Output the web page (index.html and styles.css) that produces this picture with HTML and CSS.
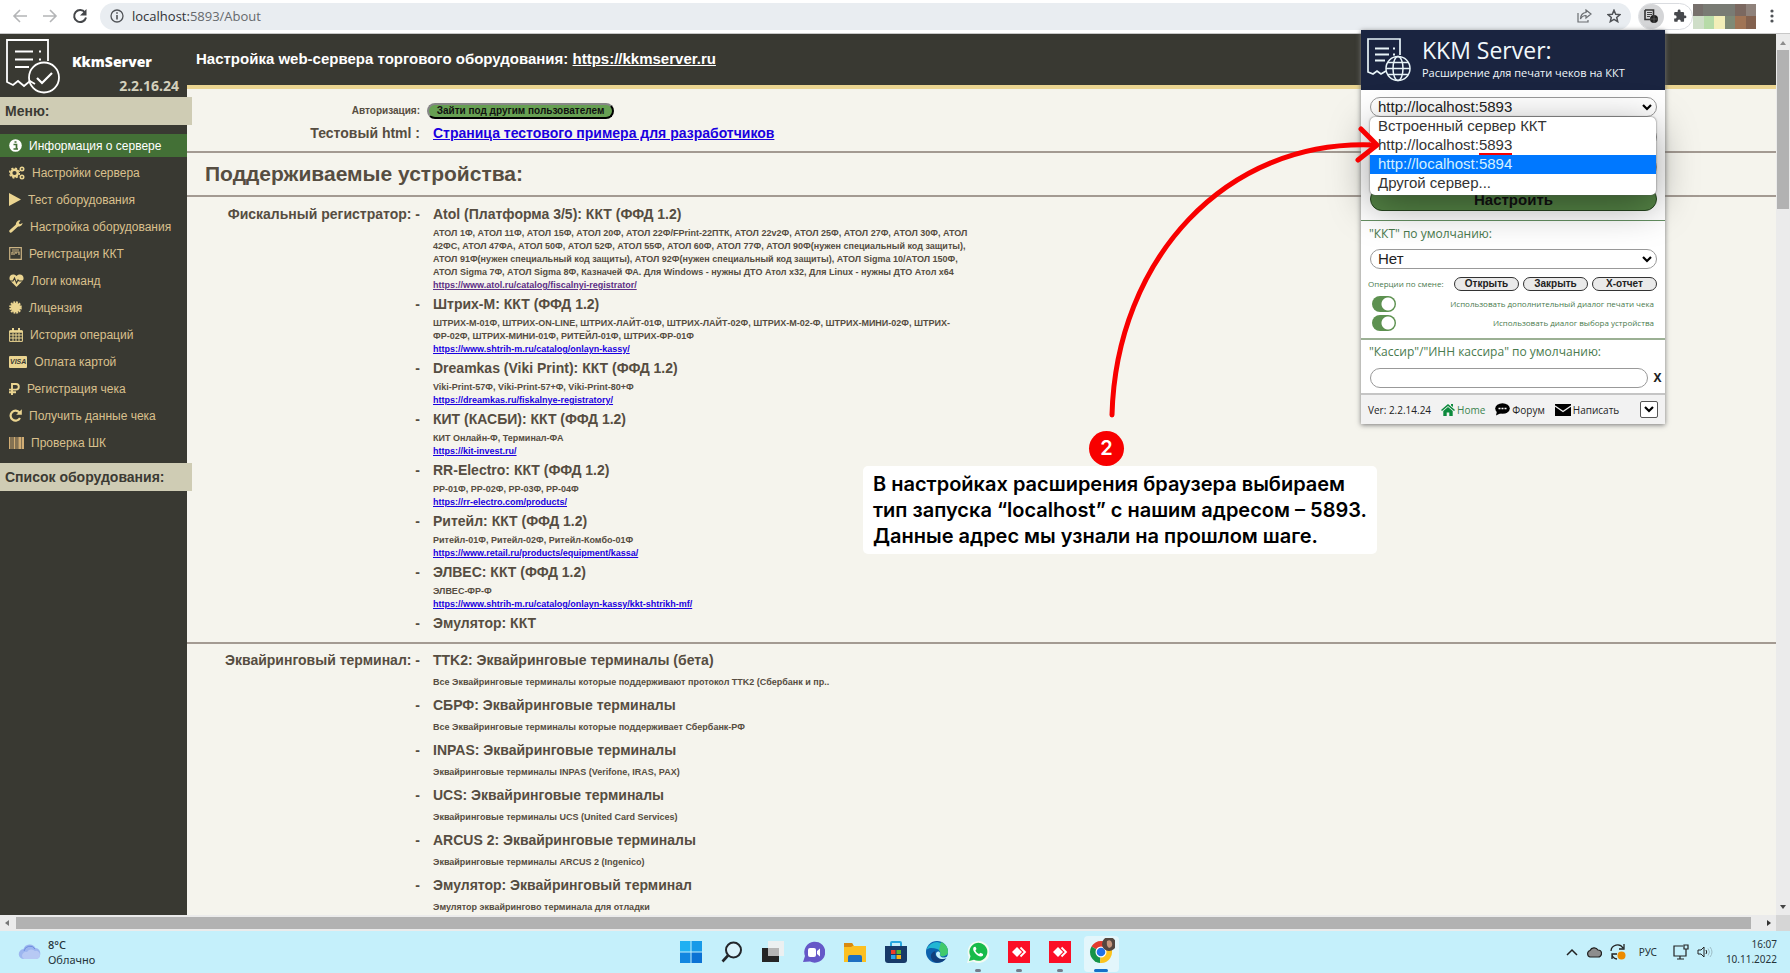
FILE: index.html
```html
<!DOCTYPE html>
<html lang="ru">
<head>
<meta charset="utf-8">
<title>KkmServer</title>
<link rel="stylesheet" href="styles.css">
</head>
<body>
<div class="toolbar">
  <button class="tool" aria-label="Назад"><svg width="16" height="16" viewBox="0 0 16 16" fill="none" stroke="#b4b5b7" stroke-width="1.6"><path d="M15 8H2M8 2L2 8l6 6"/></svg></button>
  <button class="tool" aria-label="Вперёд"><svg width="16" height="16" viewBox="0 0 16 16" fill="none" stroke="#b4b5b7" stroke-width="1.6"><path d="M1 8h13M8 2l6 6-6 6"/></svg></button>
  <button class="tool" aria-label="Обновить"><svg width="16" height="16" viewBox="0 0 16 16"><path d="M13 4.5A6 6 0 1 0 14 9.500" fill="none" stroke="#444649" stroke-width="2"/><path d="M14.500 1v6.500H8z" fill="#444649"/></svg></button>
  <div class="address">
    <svg width="14" height="14" viewBox="0 0 14 14"><circle cx="7" cy="7" r="6" fill="none" stroke="#505357" stroke-width="1.300"/><path d="M7 6v4.500M7 3.300v1.500" stroke="#505357" stroke-width="1.600"/></svg>
    <span class="url">localhost:<span class="path">5893/About</span></span>
    <svg class="share" width="15" height="14" viewBox="0 0 15 14" fill="none" stroke="#6a6d71" stroke-width="1.200"><path d="M1 4v9h10v-2M9 1l5 4-5 4V6.500C6 6.500 4.500 8 3.500 10 3.500 6 6 3.500 9 3.500z"/></svg>
    <svg width="14" height="14" viewBox="0 0 14 14" fill="none" stroke="#505357" stroke-width="1.500"><path d="M7 1.200l1.700 4 4.300.4-3.300 2.800 1 4.200L7 10.300l-3.700 2.300 1-4.200L1 5.600l4.300-.4z"/></svg>
  </div>
  <div class="extensions">
    <button class="ext active" aria-label="KKM Server"><svg width="14" height="14" viewBox="0 0 14 14"><path d="M1 1h8.500v6M1 1v9.500h5" fill="none" stroke="#333" stroke-width="1.600"/><path d="M3 3.500h5M3 5.500h5M3 7.500h3" stroke="#444"/><circle cx="10" cy="10" r="4" fill="#222"/><path d="M6.500 10h7M10 6v8" stroke="#777" stroke-width=".6"/></svg></button>
    <button class="ext" aria-label="Расширения"><svg width="14" height="14" viewBox="0 0 24 24" fill="#46484c"><path d="M20.500 11H19V7a2 2 0 0 0-2-2h-4V3.500a2.500 2.500 0 0 0-5 0V5H4a2 2 0 0 0-2 2v3.800h1.500a2.700 2.700 0 0 1 0 5.400H2V20a2 2 0 0 0 2 2h3.800v-1.500a2.700 2.700 0 0 1 5.400 0V22H17a2 2 0 0 0 2-2v-4h1.500a2.500 2.500 0 0 0 0-5z"/></svg></button>
  </div>
  <svg class="profile" width="63" height="25" viewBox="0 0 63 25" shape-rendering="crispEdges"><path fill="#77706c" d="M0 0h63v12H0z"/><path fill="#797b74" d="M10 0h32v12H10z"/><path fill="#7b6860" d="M42 0h11v12H42z"/><path fill="#8f827b" d="M53 0h10v12H53z"/><path fill="#cfdec8" d="M0 12h11v13H0z"/><path fill="#b7dba8" d="M11 12h10v13H11z"/><path fill="#f3eeb8" d="M21 12h11v13H21z"/><path fill="#7f8a76" d="M32 12h10v13H32z"/><path fill="#a07455" d="M42 12h11v13H42z"/><path fill="#83614e" d="M53 12h10v13H53z"/></svg>
  <button class="more" aria-label="Меню браузера"><svg width="4" height="14" viewBox="0 0 4 14" fill="#505357"><circle cx="2" cy="2" r="1.600"/><circle cx="2" cy="7" r="1.600"/><circle cx="2" cy="12" r="1.600"/></svg></button>
</div>

<div class="viewport">
  <aside class="sidebar">
    <div class="brand">
      <svg width="56" height="56" viewBox="0 0 56 56" fill="none" stroke="#fff" stroke-width="1.800"><path d="M43 23V2H2v42l6 3 5-4 6 5 6-5 5 3"/><path d="M10 13.500h18M10 21.500h18M10 29h14M34 13.500h2M34 21.500h2" stroke-width="2.200"/><circle cx="39" cy="39.500" r="15"/><path d="M32 40l5 5 10-10" stroke-width="2.200"/></svg>
      <div class="brand-name"><strong>KkmServer</strong><span>2.2.16.24</span></div>
    </div>
    <h2 class="side-title">Меню:</h2>
    <nav class="menu">
      <a class="current" href="#"><svg width="13" height="13" viewBox="0 0 13 13"><circle cx="6.500" cy="6.500" r="6.300" fill="#fff"/><path d="M4.500 5.500h3V10M4.500 10h4.500M5.500 3h2" stroke="#437036" stroke-width="1.700" fill="none"/></svg>Информация о сервере</a>
      <a href="#"><svg width="16" height="14" viewBox="0 0 16 14" fill="none" stroke="#ebd591"><circle cx="5.500" cy="7" r="3.300" stroke-width="2.400"/><circle cx="5.500" cy="7" r="4.900" stroke-width="1.500" stroke-dasharray="2 1.850"/><circle cx="13" cy="3" r="1.700" stroke-width="1.600"/><circle cx="13" cy="11" r="1.700" stroke-width="1.600"/></svg>Настройки сервера</a>
      <a href="#"><svg width="12" height="13" viewBox="0 0 12 13"><path d="M0 0l12 6.500L0 13z" fill="#ebd591"/></svg>Тест оборудования</a>
      <a href="#"><svg width="14" height="13" viewBox="0 0 14 13"><path d="M1.800 11.200L8 5.500" stroke="#ebd591" stroke-width="3" stroke-linecap="round"/><path d="M11.500.4a4 4 0 0 0-4.500 5A4 4 0 0 0 13.700 3L11 4.200 9.700 3z" fill="#ebd591"/></svg>Настройка оборудования</a>
      <a href="#"><svg width="13" height="13" viewBox="0 0 13 13"><path d="M.7.7h11.600v11.600H.7zM3 3h7M3 5h7v3M3 5v3M5 6v2M7 5v2" fill="none" stroke="#cbb383" stroke-width="1.200"/></svg>Регистрация ККТ</a>
      <a href="#"><svg width="15" height="13" viewBox="0 0 15 13"><path d="M7.500 13L1.300 6.800C-1.500 3 3 -2 7.500 2c4.500-4 9 1 6.200 4.800z" fill="#ebd591"/><path d="M0 7h4l1.500-3 2 5L9 6l1 1h5" fill="none" stroke="#393932" stroke-width="1.100"/></svg>Логи команд</a>
      <a href="#"><svg width="13" height="13" viewBox="0 0 13 13"><circle cx="6.500" cy="6.500" r="4.800" fill="#ebd591"/><circle cx="6.500" cy="6.500" r="5.400" fill="none" stroke="#ebd591" stroke-width="1.800" stroke-dasharray="1.900 .92"/></svg>Лицензия</a>
      <a href="#"><svg width="14" height="14" viewBox="0 0 14 14" fill="none" stroke="#ebd591"><path d="M.6 3h12.800v10.400H.6zM.6 7h12.800M.6 10h12.800M4 5v8M7 5v8M10 5v8"/><path d="M.6 3.500h12.800" stroke-width="2.500"/><path d="M4 0v3M10 0v3" stroke-width="2"/></svg>История операций</a>
      <a href="#"><span class="visa">VISA</span>Оплата картой</a>
      <a href="#"><svg width="11" height="12" viewBox="0 0 11 12"><path d="M3 12V1h4a2.700 2.700 0 0 1 0 5.600H0M0 9.200h7" fill="none" stroke="#ebd591" stroke-width="1.900"/></svg>Регистрация чека</a>
      <a href="#"><svg width="13" height="13" viewBox="0 0 13 13"><path d="M10.500 3.500A5 5 0 1 0 11 9" fill="none" stroke="#ebd591" stroke-width="2.200"/><path d="M12.800.2v5.600H7.200z" fill="#ebd591"/></svg>Получить данные чека</a>
      <a href="#"><svg width="15" height="12" viewBox="0 0 15 12"><path d="M0 0h1.500v12H0zM2.500 0h1v12h-1zM4.500 0h2v12h-2zM7.500 0h1v12h-1zM9.300 0h3v12h-3zM12.800 0H15v12h-2.200z" fill="#d1ad74"/></svg>Проверка ШК</a>
    </nav>
    <h2 class="side-title">Список оборудования:</h2>
  </aside>

  <main class="main">
    <header class="page-head">Настройка web-сервера торгового оборудования: <a href="#">https://kkmserver.ru</a></header>
    <section class="block intro">
      <div class="row"><span class="label small">Авторизация:</span><div class="login"><button class="pill-green">Зайти под другим пользователем</button></div></div>
      <div class="row"><span class="label">Тестовый html :</span><div><a href="#">Страница тестового примера для разработчиков</a></div></div>
    </section>
    <h1 class="heading">Поддерживаемые устройства:</h1>
    <section class="block devices">
      <div class="row"><span class="label">Фискальный регистратор: -</span><div><h3>Atol (Платформа 3/5): ККТ (ФФД 1.2)</h3><p>АТОЛ 1Ф, АТОЛ 11Ф, АТОЛ 15Ф, АТОЛ 20Ф, АТОЛ 22Ф/FPrint-22ПТК, АТОЛ 22v2Ф, АТОЛ 25Ф, АТОЛ 27Ф, АТОЛ 30Ф, АТОЛ 42ФС, АТОЛ 47ФА, АТОЛ 50Ф, АТОЛ 52Ф, АТОЛ 55Ф, АТОЛ 60Ф, АТОЛ 77Ф, АТОЛ 90Ф(нужен специальный код защиты), АТОЛ 91Ф(нужен специальный код защиты), АТОЛ 92Ф(нужен специальный код защиты), АТОЛ Sigma 10/АТОЛ 150Ф, АТОЛ Sigma 7Ф, АТОЛ Sigma 8Ф, Казначей ФА. Для Windows - нужны ДТО Атол x32, Для Linux - нужны ДТО Атол x64</p><p><a class="visited" href="#">https://www.atol.ru/catalog/fiscalnyi-registrator/</a></p></div></div>
      <div class="row"><span class="label">-</span><div><h3>Штрих-М: ККТ (ФФД 1.2)</h3><p>ШТРИХ-М-01Ф, ШТРИХ-ON-LINE, ШТРИХ-ЛАЙТ-01Ф, ШТРИХ-ЛАЙТ-02Ф, ШТРИХ-М-02-Ф, ШТРИХ-МИНИ-02Ф, ШТРИХ-<span class="keep">ФР-02Ф,</span> ШТРИХ-МИНИ-01Ф, РИТЕЙЛ-01Ф, ШТРИХ-ФР-01Ф</p><p><a href="#">https://www.shtrih-m.ru/catalog/onlayn-kassy/</a></p></div></div>
      <div class="row"><span class="label">-</span><div><h3>Dreamkas (Viki Print): ККТ (ФФД 1.2)</h3><p>Viki-Print-57Ф, Viki-Print-57+Ф, Viki-Print-80+Ф</p><p><a href="#">https://dreamkas.ru/fiskalnye-registratory/</a></p></div></div>
      <div class="row"><span class="label">-</span><div><h3>КИТ (КАСБИ): ККТ (ФФД 1.2)</h3><p>КИТ Онлайн-Ф, Терминал-ФА</p><p><a href="#">https://kit-invest.ru/</a></p></div></div>
      <div class="row"><span class="label">-</span><div><h3>RR-Electro: ККТ (ФФД 1.2)</h3><p>РР-01Ф, РР-02Ф, РР-03Ф, РР-04Ф</p><p><a href="#">https://rr-electro.com/products/</a></p></div></div>
      <div class="row"><span class="label">-</span><div><h3>Ритейл: ККТ (ФФД 1.2)</h3><p>Ритейл-01Ф, Ритейл-02Ф, Ритейл-Комбо-01Ф</p><p><a href="#">https://www.retail.ru/products/equipment/kassa/</a></p></div></div>
      <div class="row"><span class="label">-</span><div><h3>ЭЛВЕС: ККТ (ФФД 1.2)</h3><p>ЭЛВЕС-ФР-Ф</p><p><a href="#">https://www.shtrih-m.ru/catalog/onlayn-kassy/kkt-shtrikh-mf/</a></p></div></div>
      <div class="row"><span class="label">-</span><div><h3>Эмулятор: ККТ</h3></div></div>
    </section>
    <section class="block terminals">
      <div class="row"><span class="label">Эквайринговый терминал: -</span><div><h3>TTK2: Эквайринговые терминалы (бета)</h3><p>Все Эквайринговые терминалы которые поддерживают протокол TTK2 (Сбербанк и пр..</p></div></div>
      <div class="row"><span class="label">-</span><div><h3>СБРФ: Эквайринговые терминалы</h3><p>Все Эквайринговые терминалы которые поддерживает Сбербанк-РФ</p></div></div>
      <div class="row"><span class="label">-</span><div><h3>INPAS: Эквайринговые терминалы</h3><p>Эквайринговые терминалы INPAS (Verifone, IRAS, PAX)</p></div></div>
      <div class="row"><span class="label">-</span><div><h3>UCS: Эквайринговые терминалы</h3><p>Эквайринговые терминалы UCS (United Card Services)</p></div></div>
      <div class="row"><span class="label">-</span><div><h3>ARCUS 2: Эквайринговые терминалы</h3><p>Эквайринговые терминалы ARCUS 2 (Ingenico)</p></div></div>
      <div class="row"><span class="label">-</span><div><h3>Эмулятор: Эквайринговый терминал</h3><p>Эмулятор эквайрингово терминала для отладки</p></div></div>
    </section>
  </main>

  <div class="vscroll"><svg width="8" height="16" viewBox="0 0 8 16"><path d="M1 11l3-4 3 4z" fill="#8c8c8c"/></svg><div class="vthumb"></div><svg width="8" height="16" viewBox="0 0 8 16"><path d="M1 6l3 4 3-4z" fill="#444"/></svg></div>
</div>

<div class="hscroll"><svg width="16" height="8" viewBox="0 0 16 8"><path d="M9 1L5 4l4 3z" fill="#777"/></svg><div class="hthumb"></div><svg width="25" height="8" viewBox="0 0 25 8"><path d="M16 1l4 3-4 3z" fill="#333"/></svg><div class="corner"></div></div>

<footer class="taskbar">
  <div class="weather">
    <svg width="24" height="18" viewBox="0 0 24 18"><path d="M6 16a5 5 0 0 1-.5-10 6.500 6.500 0 0 1 12-1A5.600 5.600 0 0 1 18 16z" fill="#9db6ef"/><path d="M4 13a4 4 0 0 1 5-4 5 5 0 0 1 8-1 4 4 0 0 1 5 4 4 4 0 0 1-4 4H6a4 4 0 0 1-2-3z" fill="#b7c9f4"/><path d="M6 8a6 6 0 0 1 11-2" fill="none" stroke="#6e8fe0"/></svg>
    <div><b>8°C</b><span>Облачно</span></div>
  </div>
  <div class="apps">
    <button aria-label="Пуск"><svg viewBox="0 0 22 22"><path d="M0 0h10.500v10.500H0z" fill="#20b0f2"/><path d="M11.500 0H22v10.500H11.500z" fill="#189ae8"/><path d="M0 11.500h10.500V22H0z" fill="#1286e0"/><path d="M11.500 11.500H22V22H11.500z" fill="#0b72d4"/></svg></button>
    <button aria-label="Поиск"><svg viewBox="0 0 22 22"><circle cx="12.500" cy="9" r="7.500" fill="#d9f2fa" stroke="#23262a" stroke-width="2"/><path d="M7 14.500L1.500 20.500" stroke="#23262a" stroke-width="2.600"/></svg></button>
    <button aria-label="Представление задач"><svg viewBox="0 0 22 22"><path d="M0 7h17v14H0z" fill="#252525"/><path d="M6 0h16v15H6z" fill="#f0f0f0" opacity=".9"/><path d="M6 7h11v8H6z" fill="#b5b5b5"/></svg></button>
    <button aria-label="Чат"><svg viewBox="0 0 22 22"><path d="M0 21l2-6A10.500 10.500 0 1 1 7 20.500z" fill="#6558c8"/><rect x="5" y="7" width="8" height="9" rx="2" fill="#fff"/><path d="M14 10l3-2.500v8L14 13z" fill="#fff"/></svg></button>
    <button aria-label="Проводник"><svg viewBox="0 0 22 22"><path d="M0 2h8l2 3h12v16H0z" fill="#fcc021"/><path d="M0 2h8l1.500 2.500L7 6H0z" fill="#d98a10"/><path d="M4 21v-5q0-2 2-2h10q2 0 2 2v5z" fill="#1d6fc1"/></svg></button>
    <button aria-label="Магазин"><svg viewBox="0 0 22 22"><path d="M6 5V2q0-1 1-1h8q1 0 1 1v3" fill="none" stroke="#28a8e0" stroke-width="2"/><path d="M0 5h22v14q0 3-3 3H3q-3 0-3-3z" fill="#173a68"/><path d="M6 9h4.500v4H6z" fill="#f03c28"/><path d="M11.500 9H16v4h-4.500z" fill="#5ab52e"/><path d="M6 14h4.500v4H6z" fill="#29a5ea"/><path d="M11.500 14H16v4h-4.500z" fill="#f8b415"/></svg></button>
    <button aria-label="Edge"><svg viewBox="0 0 22 22"><circle cx="11" cy="11" r="11" fill="#0d62ae"/><path d="M.5 9A11 11 0 0 1 22 11c0 4-7 5.500-8 3 1-2 .5-5-3-6S3 6 .5 9z" fill="#23b6d3"/><path d="M15 1a11 11 0 0 1 7 10c0 4-7 5.500-8 3 1-2 0-4-1-5z" fill="#40c96c"/><path d="M9.500 10c-2 5 3 9.500 11 7-3 4-8 5.500-12 4C3 18 4 11 9.500 10z" fill="#123f7c"/><path d="M13.700 14c1 3 5 3.500 8.300 1l-1 2c-5 2.500-11 0-11-4 0-2 2-3 3.500-2 .8 1 .8 2 .2 3z" fill="#c5f0fb"/></svg></button>
    <button class="running" aria-label="WhatsApp"><svg viewBox="0 0 22 22"><path d="M0 22l1.800-6A11 11 0 1 1 6 20.500z" fill="#f3fbf3"/><path d="M2 20l1.500-4.800A9 9 0 1 1 7 18.700z" fill="#18bb4a"/><path d="M7 6c-2 2 0 5 2 7s5 3.500 7 1.500l0-1.500-2.500-1.300-1.500 1.300c-2-.8-3-2-3.600-3.500L9.500 8 8.500 5.800z" fill="#fff"/></svg></button>
    <button class="running" aria-label="AnyDesk 1"><svg viewBox="0 0 22 22"><path d="M0 0h22v22H0z" fill="#fb0f26"/><path d="M4 11l5-5 5 5-5 5z" fill="#fff"/><path d="M12.500 6.500L17 11l-4.500 4.500" fill="none" stroke="#fff" stroke-width="1.800"/></svg></button>
    <button class="running" aria-label="AnyDesk 2"><svg viewBox="0 0 22 22"><path d="M0 0h22v22H0z" fill="#fb0f26"/><path d="M4 11l5-5 5 5-5 5z" fill="#fff"/><path d="M12.500 6.500L17 11l-4.500 4.500" fill="none" stroke="#fff" stroke-width="1.800"/></svg></button>
    <button class="open" aria-label="Chrome"><svg viewBox="0 0 28 28"><path d="M14 14L4.500 8.500A11 11 0 0 1 23.500 8.500L14 9z" fill="#e33b2e"/><path d="M14 14l-9.500-5.500A11 11 0 0 0 13 25z" fill="#159447"/><path d="M14 14l9.500-5.500A11 11 0 0 1 13 25z" fill="#fcc31e"/><circle cx="14" cy="14" r="5.500" fill="#fff"/><circle cx="14" cy="14" r="4.300" fill="#2172e8"/><circle cx="22" cy="6" r="7" fill="#55463f"/><path d="M20 3q4-2 5 2t-3 5q-3-2-2-7z" fill="#c5957d"/></svg></button>
  </div>
  <div class="tray">
    <svg width="12" height="8" viewBox="0 0 12 8"><path d="M1 7l5-5 5 5" fill="none" stroke="#222" stroke-width="1.500"/></svg>
    <svg width="16" height="12" viewBox="0 0 16 12"><path d="M4 11a3.400 3.400 0 0 1 0-6.500 4.500 4.500 0 0 1 8-.5 3.500 3.500 0 0 1 0 7z" fill="#8d8d8d" stroke="#222" stroke-width="1.200"/></svg>
    <svg width="16" height="16" viewBox="0 0 16 16"><path d="M1 7a6.500 6.500 0 0 1 12-3M14 0v5H9M2 15v-5h5M2 11a6 6 0 0 0 5 4" fill="none" stroke="#222" stroke-width="1.300"/><circle cx="11.500" cy="11.500" r="4" fill="#ed8b00"/></svg>
    <span class="lang">РУС</span>
    <svg width="16" height="16" viewBox="0 0 16 16" fill="none" stroke="#222" stroke-width="1.200"><path d="M10 2H1v10h12V8M4 15h7M7 12v3M11 1h4v4h-4zM13 5v4"/></svg>
    <svg width="16" height="12" viewBox="0 0 16 12" fill="none" stroke="#222"><path d="M1 4h3l3-3v10L4 8H1zM9 4q1.500 2 0 4"/><path d="M11 2.500q3 3.500 0 7M13 1q4 5 0 10" stroke="#9cbcc5"/></svg>
    <div class="clock"><span>16:07</span><span>10.11.2022</span></div>
  </div>
</footer>

<div class="popup">
  <header class="popup-head">
    <svg width="44" height="44" viewBox="0 0 44 44" fill="none" stroke="#e8f4f8" stroke-width="1.700"><path d="M33 17V1H1v33l5 2 4-3 4 3 5-3"/><path d="M8 10.500h14M8 16.500h14M8 22.500h10M26 10.500h2M26 16.500h2" stroke-width="2"/><circle cx="31" cy="30.500" r="12" stroke-width="1.500"/><ellipse cx="31" cy="30.500" rx="5" ry="12" stroke-width="1.500"/><path d="M19 30.500h24M21 24.500h20M21 36.500h20" stroke-width="1.500"/></svg>
    <div><strong>KKM Server:</strong><span>Расширение для печати чеков на ККТ</span></div>
  </header>
  <div class="popup-part server">
    <div class="combo">
      <select aria-label="Сервер"><option>http://localhost:5893</option></select>
      <ul class="options" role="listbox">
        <li role="option">Встроенный сервер ККТ</li>
        <li role="option">http://localhost:<span class="mark">5893</span></li>
        <li role="option" class="hover">http://localhost:5894</li>
        <li role="option">Другой сервер...</li>
      </ul>
    </div>
    <input type="text" aria-label="Логин">
    <input type="password" aria-label="Пароль">
    <button class="setup">Настроить</button>
  </div>
  <div class="popup-part kkt">
    <label for="kkt">"ККТ" по умолчанию:</label>
    <select id="kkt"><option>Нет</option></select>
    <div class="shift"><span>Оперции по смене:</span><button>Открыть</button><button>Закрыть</button><button>X-отчет</button></div>
    <div class="switch"><input type="checkbox" id="sw1" checked><label for="sw1">Использовать дополнительный диалог печати чека</label></div>
    <div class="switch"><input type="checkbox" id="sw2" checked><label for="sw2">Использовать диалог выбора устройства</label></div>
  </div>
  <div class="popup-part cashier">
    <label for="cash">"Кассир"/"ИНН кассира" по умолчанию:</label>
    <div class="cash-row"><input id="cash" type="text"><button aria-label="Очистить">X</button></div>
  </div>
  <footer class="popup-foot">
    <span>Ver: 2.2.14.24</span>
    <a class="home" href="#"><svg width="14" height="12" viewBox="0 0 14 12" fill="#0c8a3c"><path d="M7 0l7 6-1 1-6-5-6 5-1-1zM10 0h2v3l-2-1.500zM2.300 7L7 3l4.700 4v5H8.300V8.500H5.700V12H2.300z"/></svg>Home</a>
    <a href="#"><svg width="15" height="13" viewBox="0 0 15 13"><ellipse cx="7.500" cy="5.500" rx="7.300" ry="5.300" fill="#000"/><path d="M2 8l-1 4.500 5-2.500z"/><path d="M3.500 5.500h2M6.500 5.500h2M9.500 5.500h2" stroke="#fff" stroke-width="1.600"/></svg>Форум</a>
    <a href="#"><svg width="16" height="12" viewBox="0 0 16 12"><path d="M0 0h16v12H0z"/><path d="M0 2l8 5.500L16 2" fill="none" stroke="#f2f2f2" stroke-width="1.400"/></svg>Написать</a>
    <button aria-label="Развернуть"><svg width="10" height="7" viewBox="0 0 10 7"><path d="M1 1l4 4 4-4" fill="none" stroke="#000" stroke-width="2.200"/></svg></button>
  </footer>
</div>

<svg class="arrow" width="280" height="300" viewBox="1100 120 280 300" fill="none" stroke="#f80000" stroke-width="5" stroke-linecap="round" stroke-linejoin="round"><path d="M1112 415C1116 260 1225 139 1374 145"/><path d="M1361 129l16 16-19 15"/></svg>
<div class="note">
  <span class="step">2</span>
  <p>В настройках расширения браузера выбираем<br>тип запуска “localhost” с нашим адресом – 5893.<br>Данные адрес мы узнали на прошлом шаге.</p>
</div>
</body>
</html>
```
FILE: styles.css
```css
* { box-sizing: border-box; }
body { margin: 0; height: 100vh; display: flex; flex-direction: column; overflow: hidden; position: relative; background: #f5f4ed; font-family: "Liberation Sans", Arial, sans-serif; color: #564d41; }
button { padding: 0; border: 0; background: none; font: inherit; color: inherit; }
h1, h2, h3, p, ul { margin: 0; padding: 0; }
svg { flex: none; display: block; }

.toolbar { flex: none; height: 34px; display: flex; align-items: center; padding: 0 16px 1px 12px; background: #fff; border-bottom: 1px solid #c8c8c8; }
.tool { margin-right: 14px; }
.tool:nth-child(3) { margin-right: 12px; }
.address { flex: 1; height: 27px; display: flex; align-items: center; gap: 8px; padding: 0 10px; border-radius: 14px; background: #e9edf1; }
.url { flex: 1; font: 13px "Open Sans", sans-serif; color: #303236; }
.path { color: #66696d; }
.share { margin-right: 7px; }
.extensions { display: flex; gap: 4px; margin-left: 7px; height: 27px; border: 1px solid #dadce0; border-radius: 14px; width: 55px; align-items: center; }
.ext { width: 25px; height: 25px; display: grid; place-items: center; border-radius: 50%; }
.ext.active { background: #d4d5d7; }
.more { margin-left: 14px; }

.viewport { flex: 1; min-height: 0; display: flex; overflow: hidden; }
.sidebar { flex: none; width: 187px; background: #393932; }
.brand { height: 63px; display: flex; padding: 4px 8px 0 5px; }
.brand-name { flex: 1; display: flex; flex-direction: column; padding-top: 12px; font: bold 14px/24px "Noto Sans", sans-serif; color: #fff; }
.brand-name strong { padding-left: 11px; }
.brand-name span { text-align: right; color: #d3d0bc; }
.side-title { position: relative; z-index: 1; width: 192px; height: 28px; padding-left: 5px; background: #cfccb4; color: #3b3a33; font-size: 14px; line-height: 28px; }
.menu { display: flex; flex-direction: column; gap: 4px; padding: 9px 0; }
.menu a { height: 23px; display: flex; align-items: center; gap: 7px; padding-left: 9px; color: #d9c08d; font-size: 12px; text-decoration: none; }
.menu .current { background: #437036; color: #fff; }
.visa { padding: 0 1px; border-radius: 1px; background: #ebd591; color: #393932; font: italic bold 7px/12px "Liberation Sans", sans-serif; }

.main { flex: 1; min-width: 0; overflow: hidden; font-weight: bold; }
.page-head { height: 55px; padding: 0 9px; border-bottom: 4px solid #ebd591; background: #393932; color: #fff; font-size: 15px; line-height: 50px; }
.page-head a { color: #fff; }
.block { border-bottom: 2px solid #a39a92; }
.row { display: grid; grid-template-columns: 233px minmax(0, 546px); column-gap: 13px; }
.label { text-align: right; font-size: 14px; line-height: 25px; }
a { color: #1a00e0; }
a.visited { color: #5d2f86; }
h3, .intro a { font-size: 14px; line-height: 25px; }
p { font-size: 9px; line-height: 13px; }
.keep { white-space: nowrap; }
.intro { padding: 11px 0 5px; }
.intro .row:first-child { height: 21px; }
.label.small { font-size: 10px; line-height: 22px; font-weight: bold; }
.login { margin-left: -6px; }
.pill-green { display: block; width: 187px; height: 16px; margin-top: 3px; border: 2px outset #333; border-radius: 8px; background: #67a053; color: #111; font-weight: bold; font-size: 10px; line-height: 12px; white-space: nowrap; }
.heading { padding-left: 18px; border-bottom: 2px solid #a39a92; font-size: 21px; line-height: 42px; }
.devices { padding: 5px 0 6px; }
.terminals { padding-top: 1px; border: 0; }
.terminals h3, .terminals .label { line-height: 30px; }
.terminals p { line-height: 15px; }

.vscroll { flex: none; width: 14px; display: flex; flex-direction: column; align-items: center; background: #ebebeb; }
.vthumb { width: 12px; height: 18%; margin-bottom: auto; background: #b2b2b2; }
.hscroll { flex: none; height: 16px; display: flex; align-items: center; background: #ebebeb; }
.hthumb { flex: 1; height: 12px; background: #b2b2b2; }
.corner { width: 14px; height: 16px; background: #d6d6d6; }

.taskbar { flex: none; height: 42px; position: relative; display: flex; align-items: center; justify-content: space-between; padding: 0 13px 0 18px; background: #c5f0fb; color: #26343a; font: 11px/15px "Noto Sans", sans-serif; }
.weather { display: flex; align-items: center; gap: 6px; }
.weather div, .clock { display: flex; flex-direction: column; }
.weather b { font-weight: 500; }
.apps { position: absolute; left: 50%; top: 0; bottom: 0; width: 452px; margin-left: -225px; display: grid; grid-template-columns: repeat(11, 1fr); }
.apps button { position: relative; display: grid; place-items: center; }
.apps svg { width: 22px; height: 22px; }
.apps .open svg { width: 28px; height: 28px; position: relative; }
.apps .open::before { content: ""; position: absolute; inset: 5px 3px 1px; border-radius: 4px; background: #e3f6fb; }
.running::after, .open::after { content: ""; position: absolute; bottom: 1px; width: 6px; height: 3px; border-radius: 2px; background: #747d8c; }
.apps .open::after { width: 14px; background: #1571c8; }
.tray { display: flex; align-items: center; gap: 8px; }
.lang { margin: 0 8px 0 5px; font-size: 10px; }
.clock { text-align: right; margin-left: 5px; font-size: 10px; }

.popup { position: absolute; left: 1361px; top: 30px; width: 304px; background: #fff; box-shadow: 0 1px 5px #777; font-family: "Open Sans", sans-serif; color: #497a4d; }
.popup-head { height: 60px; display: flex; align-items: center; gap: 11px; padding: 0 6px; background: #1a2440; color: #f0f7fb; }
.popup-head div { display: flex; flex-direction: column; }
.popup-head strong { font-weight: 400; font-size: 23px; line-height: 26px; }
.popup-head span { font-size: 11px; line-height: 20px; }
.popup-part { display: flex; flex-direction: column; padding: 7px 8px 0 9px; border-bottom: 1px solid #648f61; }
.popup select, .popup input[type="text"], .popup input[type="password"] { width: 100%; height: 20px; padding: 0 8px; border: 1px solid #999; border-radius: 10px; background: #fff; }
.popup select { display: block; appearance: none; padding-left: 7px; font: 15px/18px "Liberation Sans", sans-serif; color: #222; background: url("data:image/svg+xml,%3Csvg xmlns='http://www.w3.org/2000/svg' width='10' height='7'%3E%3Cpath d='M1 1l4 4 4-4' fill='none' stroke='%23000' stroke-width='2.200'/%3E%3C/svg%3E") no-repeat right 4px center #fff; }
.server { gap: 10px; padding-bottom: 9px; }
.combo { position: relative; }
.options { position: absolute; z-index: 1; top: 20px; left: 0; right: 1px; padding-bottom: 2px; list-style: none; border-radius: 5px; background: #fff; box-shadow: 0 0 2px #555, 0 10px 40px #0006; font: 15px/18px "Liberation Sans", sans-serif; color: #333; }
.options li { height: 19px; padding-left: 8px; }
.options .hover { background: #0078ff; color: #d4f0ff; }
.mark { display: inline-block; line-height: 16px; border-bottom: 2px solid #f80000; }
.setup { height: 24px; padding-top: 2px; border: 1px solid #26451f; border-radius: 12px; background: #558546; color: #111; font: bold 15px/20px "Liberation Sans", sans-serif; }
.kkt { padding-top: 6px; padding-bottom: 6px; border-bottom: 2px solid #9bb094; }
.kkt > label, .cashier > label { margin-left: -1px; font-size: 12px; line-height: 14px; }
.kkt select { margin-top: 8px; }
.shift { display: flex; align-items: center; gap: 4px; margin: 8px 0 3px; font-size: 8px; line-height: 14px; }
.shift span { flex: 1; margin-left: -2px; white-space: nowrap; }
.shift button { flex: none; width: 65px; height: 14px; border: 1px solid #333; border-radius: 7px; background: #eaeaea; color: #222; font: bold 10px/12px "Liberation Sans", sans-serif; }
.switch { display: flex; align-items: center; justify-content: space-between; height: 19px; padding: 0 3px 0 2px; font-size: 8px; }
.switch input { appearance: none; margin: 0; width: 24px; height: 16px; border-radius: 8px; background: radial-gradient(circle at 16px 8px, #fff 6px, #5d9150 7px); }
.cashier { padding: 5px 3px 5px 9px; border-bottom: 2px solid #c5c5c5; }
.cash-row { display: flex; gap: 5px; margin-top: 9px; align-items: center; }
.cash-row button { width: 9px; flex: none; color: #222; font: bold 12px/20px "Noto Sans", sans-serif; }
.popup-foot { height: 29px; display: flex; align-items: center; gap: 10px; padding: 0 7px; background: #f2f2f2; color: #222; font-size: 10px; white-space: nowrap; }
.popup-foot a { display: flex; align-items: center; gap: 2px; color: #222; text-decoration: none; }
.popup-foot .home { color: #3c8350; }
.popup-foot button { width: 18px; height: 17px; margin-left: auto; display: grid; place-items: center; border: 1px solid #555; border-radius: 2px; background: #fff; }

.arrow { position: absolute; z-index: 2; left: 1100px; top: 120px; }
.note { position: absolute; left: 863px; top: 466px; padding: 5px 10px; border-radius: 5px; background: #fff; color: #000; font-family: Inter, sans-serif; }
.note p { font-size: 20px; font-weight: 600; line-height: 26px; white-space: nowrap; }
.step { position: absolute; left: 226px; top: -35px; width: 35px; height: 35px; border-radius: 50%; background: #f80000; color: #fff; font-weight: 600; font-size: 20px; line-height: 35px; text-align: center; }
```
